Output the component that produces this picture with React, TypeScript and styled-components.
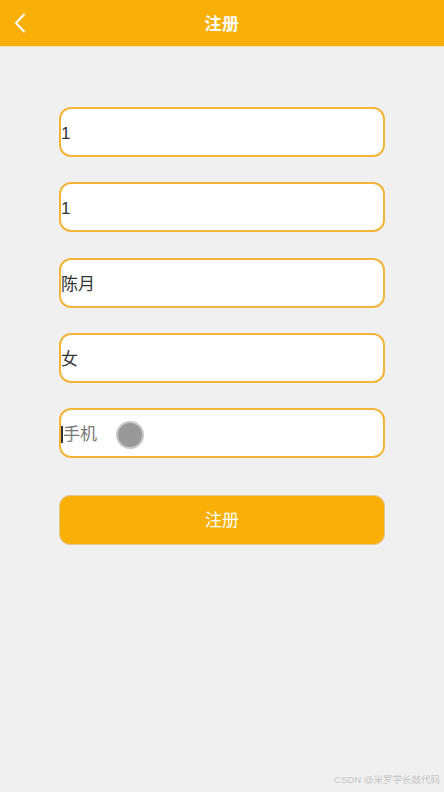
import React from "react";
import styled, { createGlobalStyle } from "styled-components";

const Global = createGlobalStyle`
  html, body { margin: 0; padding: 0; }
  body {
    background: #f0f0f0;
    font-family: "Liberation Sans", "Noto Sans CJK SC", sans-serif;
    width: 444px;
    height: 792px;
    overflow: hidden;
  }
  * { box-sizing: border-box; }
`;

const Page = styled.div`
  position: relative;
  width: 444px;
  height: 792px;
  background: #f0f0f0;
`;

const Header = styled.header`
  position: relative;
  height: 47px;
  background: #f8b008;
  border-bottom: 1px solid #f6e3bd;
  display: flex;
  align-items: center;
  justify-content: center;
  padding-bottom: 2px;
`;

const BackButton = styled.button`
  position: absolute;
  left: 10px;
  top: 10px;
  width: 20px;
  height: 26px;
  padding: 0;
  border: none;
  background: transparent;
  display: flex;
  align-items: center;
  justify-content: center;
`;

const Title = styled.h1`
  margin: 0;
  font-family: "Noto Sans CJK SC", sans-serif;
  font-size: 17px;
  font-weight: 700;
  color: #ffffff;
  letter-spacing: 0.5px;
`;

const Form = styled.form`
  width: 326px;
  margin: 60px auto 0;
  display: flex;
  flex-direction: column;
  gap: 25.3px;
`;

const Field = styled.div`
  position: relative;
  height: 50px;
  background: #ffffff;
  border: 2px solid #f3b43a;
  border-radius: 12px;
  display: flex;
  align-items: center;
  padding-left: 0;
  padding-top: 3px;
`;

const Value = styled.span<{ $placeholder?: boolean }>`
  font-family: "Liberation Sans", "Noto Sans CJK SC", sans-serif;
  font-size: 17px;
  color: ${(p) => (p.$placeholder ? "#777777" : "#333333")};
  line-height: 1;
  padding-left: ${(p) => (p.$placeholder ? "2px" : "0")};
`;

const Caret = styled.span`
  position: absolute;
  left: 0;
  top: 16px;
  width: 2px;
  height: 17px;
  background: #333;
`;

const Touch = styled.span`
  position: absolute;
  left: 55px;
  top: 11px;
  width: 28px;
  height: 28px;
  border-radius: 50%;
  background: #999999;
  border: 2px solid #c8c8c8;
`;

const Submit = styled.button`
  margin-top: 12px;
  height: 50px;
  width: 100%;
  border: 1px solid #e3c78a;
  border-radius: 11px;
  background: #f8b008;
  color: #ffffff;
  font-family: "Noto Sans CJK SC", sans-serif;
  font-size: 17px;
  padding: 0 0 4px;
`;

const Watermark = styled.div`
  position: absolute;
  right: 4px;
  bottom: 6px;
  font-family: "Liberation Sans", "Noto Sans CJK SC", sans-serif;
  font-size: 9.5px;
  color: #c4c4c4;
`;

const fields = [
  { value: "1" },
  { value: "1" },
  { value: "陈月" },
  { value: "女" },
];

export default function App() {
  return (
    <Page>
      <Global />
      <Header>
        <BackButton aria-label="返回">
          <svg width="14" height="20" viewBox="0 0 14 20" fill="none">
            <path d="M11 1.5 L3 10 L11 18.5" stroke="#ffffff" strokeWidth="2" strokeLinecap="round" strokeLinejoin="round" />
          </svg>
        </BackButton>
        <Title>注册</Title>
      </Header>
      <Form onSubmit={(e) => e.preventDefault()}>
        {fields.map((f, i) => (
          <Field key={i}>
            <Value>{f.value}</Value>
          </Field>
        ))}
        <Field>
          <Caret />
          <Value $placeholder>手机</Value>
          <Touch />
        </Field>
        <Submit type="submit">注册</Submit>
      </Form>
      <Watermark>CSDN @米罗学长敲代码</Watermark>
    </Page>
  );
}
